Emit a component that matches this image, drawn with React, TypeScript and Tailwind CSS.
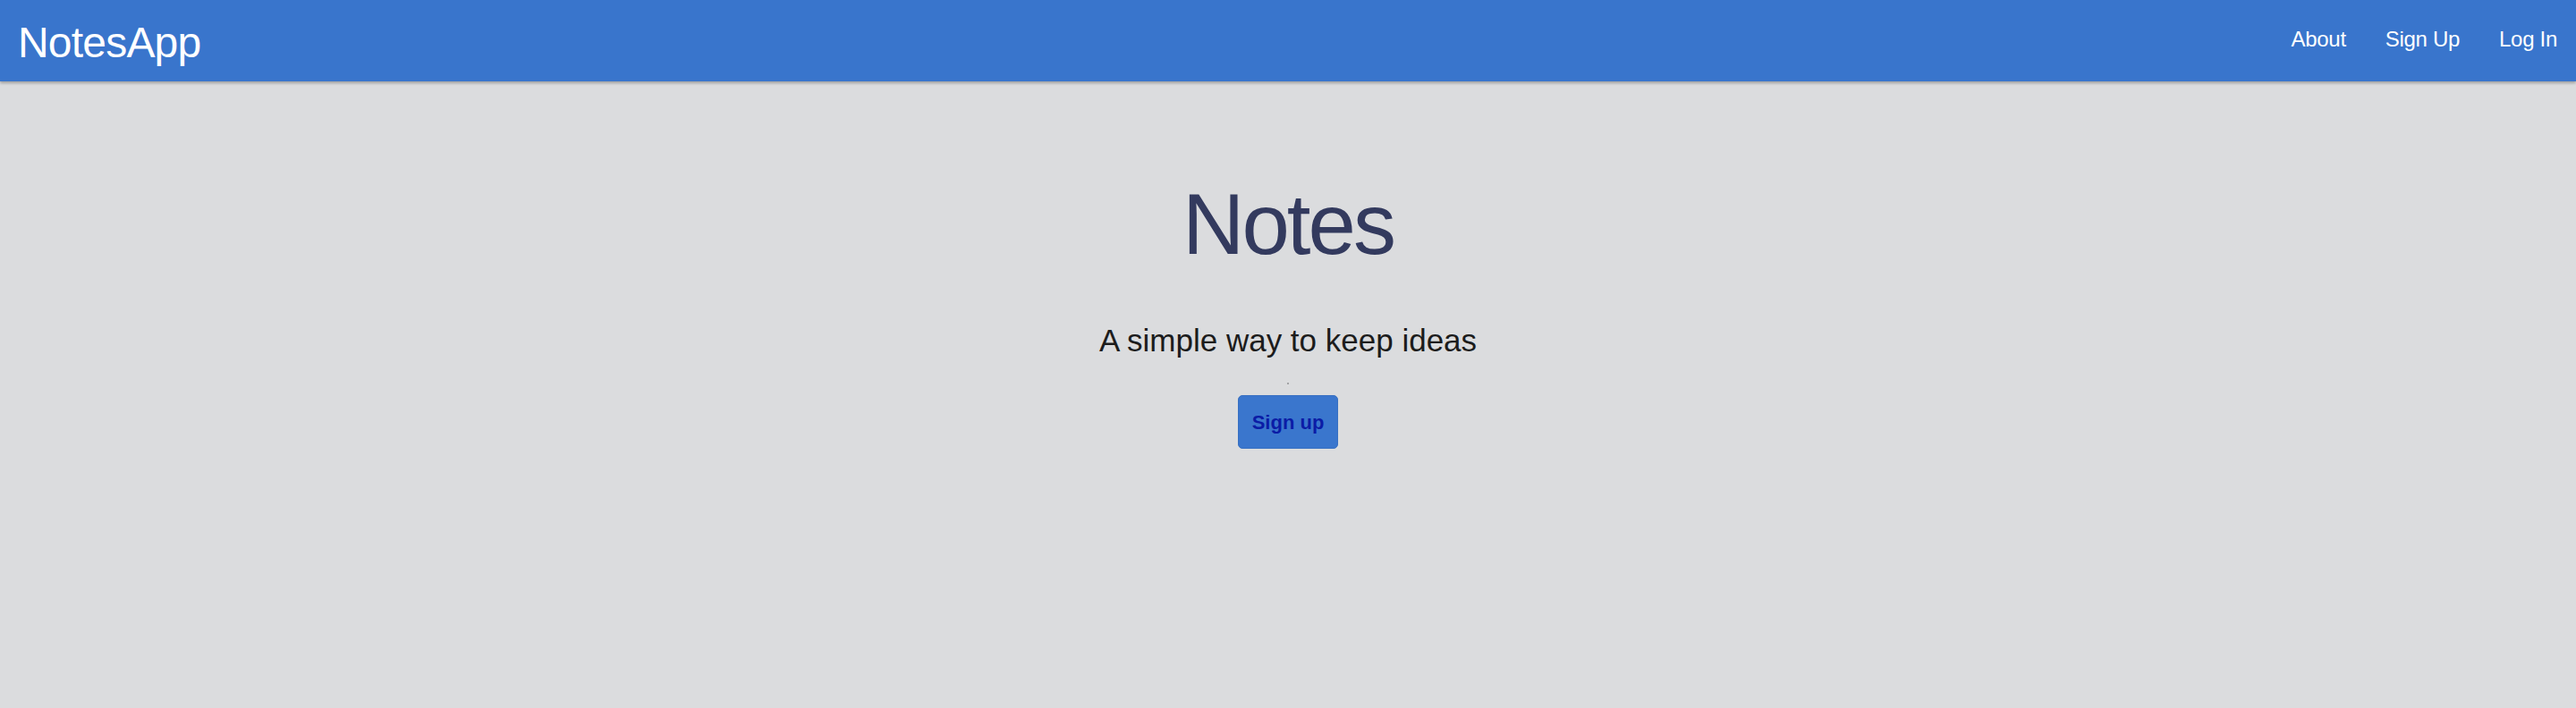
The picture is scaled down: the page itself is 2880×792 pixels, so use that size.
const font = { fontFamily: '"Liberation Sans", Arial, sans-serif' };

const links = ['About', 'Sign Up', 'Log In'];

function Navbar() {
    return (
        <nav className="relative z-10 flex h-[91px] justify-between bg-[#3975cc] shadow-[0_2px_3px_rgba(0,0,0,0.28)]">
            <a className="pl-[20px] pt-[20px] text-[48px] leading-[55px] tracking-[-0.8px] text-white">NotesApp</a>
            <ul className="flex gap-[44px] pr-[21px] pt-[30px]">
                {links.map((link) => (
                    <li key={link} className="text-[24px] leading-[28px] tracking-[-0.3px] text-white">
                        {link}
                    </li>
                ))}
            </ul>
        </nav>
    );
}

export default function App() {
    return (
        <div style={font} className="flex h-[792px] flex-col bg-[#dbdcde]">
            <Navbar />
            <main className="flex flex-1 flex-col items-center pt-[105px]">
                <h1 className="text-[96px] leading-[110px] tracking-[-3px] text-[#333a5e]">Notes</h1>
                <p className="mt-[55px] text-[35px] leading-[40px] text-[#1c1c1c]">A simple way to keep ideas</p>
                {/* stray empty element in the original */}
                <span className="mt-[27px] h-[2px] w-[2px] bg-[#a3a4a6]" />
                <button className="mt-[12px] flex h-[60px] w-[112px] items-center justify-center rounded-[5px] border border-[#3870c2] bg-[#3a76cd] text-[22px] font-bold text-[#0b1ca6]">
                    Sign up
                </button>
            </main>
        </div>
    );
}
